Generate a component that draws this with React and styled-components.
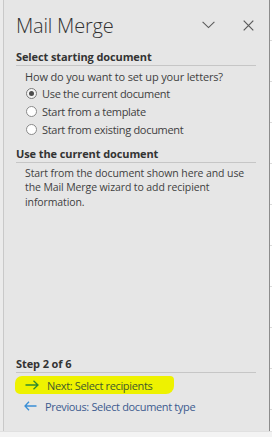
import React from "react";
import styled, { createGlobalStyle } from "styled-components";

const Global = createGlobalStyle`
  html, body { margin: 0; padding: 0; background: #ffffff; }
  body { font-family: "Open Sans", "Noto Sans", Arial, sans-serif; }
  #root { width: 272px; height: 437px; }
`;

const Frame = styled.div`
  display: flex;
  flex-direction: column;
  width: 272px;
  height: 437px;
  background: #ffffff;
`;

const Main = styled.div`
  display: flex;
  flex: 1;
  min-height: 0;
`;

const Edge = styled.div`
  width: 3px;
  background: #ebebeb;
`;

const Panel = styled.div`
  flex: 1;
  display: flex;
  flex-direction: column;
  background: #e6e6e6;
  border-left: 1px solid #c9c9c9;
  border-right: 1px solid #8c8c8c;
  padding: 0 13px 0 12px;
  color: #3b3b3b;
`;

const Gutter = styled.div`
  width: 2px;
  background: repeating-linear-gradient(
    to bottom,
    #ffffff 0px,
    #ffffff 40px,
    #dcdcdc 40px,
    #dcdcdc 41px
  );
`;

const BottomStrip = styled.div`
  height: 5px;
  background: #f3f3f3;
  border-top: 1px solid #e0e0e0;
`;

const Header = styled.div`
  display: flex;
  align-items: center;
  height: 50px;
`;

const Title = styled.h1`
  flex: 1;
  margin: 0;
  font-size: 20px;
  font-weight: 300;
  color: #333333;
  letter-spacing: -0.2px;
`;

const IconButton = styled.button`
  display: flex;
  align-items: center;
  justify-content: center;
  padding: 0;
  border: 0;
  background: transparent;
  width: 16px;
  height: 16px;
  margin-left: ${(p) => p.$gap || 0}px;
  color: #555555;
`;

const SectionTitle = styled.div`
  font-size: 11px;
  font-weight: 700;
  line-height: 14px;
  color: #333333;
  border-bottom: 1px solid #c6c6c6;
  padding-bottom: 1px;
  margin-top: ${(p) => p.$top || 0}px;
  letter-spacing: -0.1px;
`;

const Body = styled.div`
  font-size: 11px;
  color: #3f3f3f;
  padding-left: 9px;
  letter-spacing: -0.15px;
`;

const Question = styled(Body)`
  line-height: 15px;
  margin-top: 3px;
`;

const RadioList = styled.div`
  display: flex;
  flex-direction: column;
  padding-left: 10px;
`;

const RadioRow = styled.label`
  display: flex;
  align-items: center;
  height: 18px;
  gap: 5px;
  font-size: 11px;
  color: #3f3f3f;
  letter-spacing: -0.3px;
`;

const RadioDot = styled.span`
  box-sizing: border-box;
  width: 11px;
  height: 11px;
  border-radius: 50%;
  border: 1px solid ${(p) => (p.$on ? "#7a7a7a" : "#8a8a8a")};
  background: ${(p) => (p.$on ? "#f4f4f4" : "#ffffff")};
  display: flex;
  align-items: center;
  justify-content: center;
  &::after {
    content: "";
    width: 5px;
    height: 5px;
    border-radius: 50%;
    background: ${(p) => (p.$on ? "#4d4d4d" : "transparent")};
  }
`;

const Paragraph = styled(Body)`
  font-size: 10.5px;
  line-height: 14.4px;
  margin-top: 3px;
  letter-spacing: -0.1px;
`;

const Footer = styled.div`
  margin-top: auto;
  padding-bottom: 15px;
  display: flex;
  flex-direction: column;
  align-items: flex-start;
`;

const FooterTitle = styled(SectionTitle)`
  align-self: stretch;
`;

const NavRow = styled.div`
  display: flex;
  align-items: center;
  gap: 8px;
  height: ${(p) => (p.$hl ? 18 : 20)}px;
  margin-left: -1px;
  margin-top: ${(p) => (p.$hl ? 3 : 2)}px;
  padding: 0 ${(p) => (p.$hl ? 22 : 0)}px 0 ${(p) => (p.$hl ? 10 : 9)}px;
  background: ${(p) => (p.$hl ? "#eef200" : "transparent")};
  border-radius: ${(p) => (p.$hl ? "7px 4px 8px 5px" : "0")};
  font-size: 11px;
  letter-spacing: -0.35px;
  color: ${(p) => p.$color};
`;

const Arrow = ({ color }) => (
  <svg width="14" height="10" viewBox="0 0 14 10" fill="none">
    <path
      d="M0.5 5 H13 M8.5 0.8 L13 5 L8.5 9.2"
      stroke={color}
      strokeWidth="1.3"
    />
  </svg>
);

const BackArrow = ({ color }) => (
  <svg width="13" height="10" viewBox="0 0 13 10" fill="none">
    <path
      d="M12.5 5 H1 M5 0.8 L1 5 L5 9.2"
      stroke={color}
      strokeWidth="1.3"
    />
  </svg>
);

export default function App() {
  return (
    <Frame>
      <Global />
      <Main>
        <Edge />
        <Panel>
          <Header>
            <Title>Mail Merge</Title>
            <IconButton aria-label="Options">
              <svg width="13" height="8" viewBox="0 0 13 8" fill="none">
                <path d="M0.6 0.8 L6.5 6.6 L12.4 0.8" stroke="#5a5a5a" strokeWidth="1.1" />
              </svg>
            </IconButton>
            <IconButton aria-label="Close" $gap={24}>
              <svg width="11" height="11" viewBox="0 0 11 11" fill="none">
                <path d="M0.7 0.7 L10.3 10.3 M10.3 0.7 L0.7 10.3" stroke="#5a5a5a" strokeWidth="1.2" />
              </svg>
            </IconButton>
          </Header>

          <SectionTitle>Select starting document</SectionTitle>
          <Question>How do you want to set up your letters?</Question>
          <RadioList>
            <RadioRow>
              <RadioDot $on />
              Use the current document
            </RadioRow>
            <RadioRow>
              <RadioDot />
              Start from a template
            </RadioRow>
            <RadioRow>
              <RadioDot />
              Start from existing document
            </RadioRow>
          </RadioList>

          <SectionTitle $top={9}>Use the current document</SectionTitle>
          <Paragraph>
            Start from the document shown here and use
            <br />
            the Mail Merge wizard to add recipient
            <br />
            information.
          </Paragraph>

          <Footer>
            <FooterTitle>Step 2 of 6</FooterTitle>
            <NavRow $hl $color="#3f5a2c">
              <Arrow color="#2f8a2f" />
              Next: Select recipients
            </NavRow>
            <NavRow $color="#3d5b8f">
              <BackArrow color="#3a8fd6" />
              Previous: Select document type
            </NavRow>
          </Footer>
        </Panel>
        <Gutter />
      </Main>
      <BottomStrip />
    </Frame>
  );
}
